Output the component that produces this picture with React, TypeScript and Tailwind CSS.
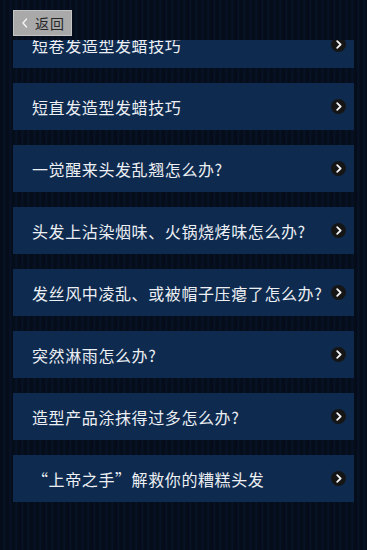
import React from "react";

const items = [
  "短卷发造型发蜡技巧",
  "短直发造型发蜡技巧",
  "一觉醒来头发乱翘怎么办?",
  "头发上沾染烟味、火锅烧烤味怎么办?",
  "发丝风中凌乱、或被帽子压瘪了怎么办?",
  "突然淋雨怎么办?",
  "造型产品涂抹得过多怎么办?",
  "“上帝之手”解救你的糟糕头发",
];

function Chevron() {
  return (
    <span className="flex h-[15px] w-[15px] shrink-0 items-center justify-center rounded-full bg-[#151515]">
      <svg width="8" height="9" viewBox="0 0 8 9" fill="none">
        <path d="M2.2 1.2 L5.6 4.5 L2.2 7.8" stroke="#f2f2f2" strokeWidth="1.8" strokeLinecap="round" strokeLinejoin="round" />
      </svg>
    </span>
  );
}

export default function App() {
  return (
    <div
      className="relative h-[550px] w-[367px] overflow-hidden bg-[#050d1a] bg-[repeating-linear-gradient(90deg,#050d1a_0px,#050d1a_3px,#08142a_4px,#050d1a_6px)]"
      style={{ fontFamily: '"Noto Sans CJK SC", "Noto Sans", sans-serif' }}
    >
      <div className="absolute left-0 top-0 z-10 h-[40px] w-full bg-[#050d1a] bg-[repeating-linear-gradient(90deg,#050d1a_0px,#050d1a_3px,#08142a_4px,#050d1a_6px)]">
        <button className="absolute left-[13px] top-[10px] flex h-[26px] w-[59px] items-center gap-[6px] border border-[#c4c4c4] bg-[#a9a9a9] pl-[7px] text-[14px] leading-none tracking-[1px] text-[#262626]">
          <svg width="8" height="12" viewBox="0 0 8 12" fill="none">
            <path d="M5.5 2 L2 6 L5.5 10" stroke="#f4f4f4" strokeWidth="1.4" strokeLinecap="round" strokeLinejoin="round" />
          </svg>
          返回
        </button>
      </div>

      <div className="flex flex-col gap-[15px] px-[13px] pt-[21px]">
        {items.map((t, i) => (
          <div
            key={i}
            className="flex h-[47px] items-center justify-between bg-[#0e2a4f] pl-[19px] pr-[8px]"
          >
            <span className="whitespace-nowrap text-[16px] tracking-[0.6px] text-[#eceff3]">{t}</span>
            <Chevron />
          </div>
        ))}
      </div>
    </div>
  );
}
